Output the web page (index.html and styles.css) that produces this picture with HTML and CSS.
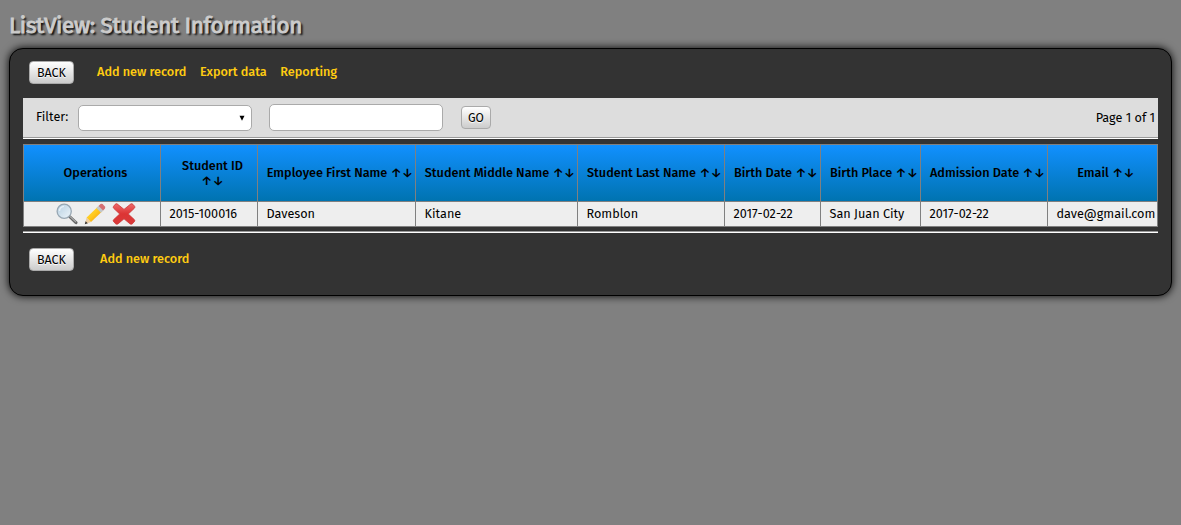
FILE: index.html
```html
<!DOCTYPE html>
<html lang="en">
<head>
<meta charset="utf-8">
<title>ListView: Student Information</title>
<link rel="stylesheet" href="styles.css">
</head>
<body>
<svg class="defs" width="0" height="0">
  <defs>
    <linearGradient id="lens" x1="0" y1="0" x2="1" y2="1"><stop offset="0" stop-color="#b4cde0"/><stop offset="1" stop-color="#eef6fb"/></linearGradient>
    <linearGradient id="wood" x1="0" y1="0" x2="1" y2="1"><stop offset="0" stop-color="#ffe34a"/><stop offset=".5" stop-color="#ffc71c"/><stop offset="1" stop-color="#f08a0c"/></linearGradient>
    <linearGradient id="red" x1="0" y1="0" x2="0" y2="1"><stop offset="0" stop-color="#ee6a6a"/><stop offset=".5" stop-color="#dc3434"/><stop offset="1" stop-color="#d93a3a"/></linearGradient>
  </defs>
</svg>
<h1 class="title">ListView: Student Information</h1>
<main class="panel">
  <div class="toolbar">
    <button class="btn back">BACK</button>
    <nav class="links"><a class="link">Add new record</a><a class="link">Export data</a><a class="link">Reporting</a></nav>
  </div>
  <form class="filter">
    <label class="filter-label">Filter:</label>
    <div class="select"><svg width="6" height="6" viewBox="0 0 6 6"><path d="M.5 .8H5.5L3 5.7Z"/></svg></div>
    <input class="field" type="text">
    <button class="btn go" type="button">GO</button>
    <span class="page">Page 1 of 1</span>
  </form>
  <div class="rule"></div>
  <table class="grid">
    <colgroup><col class="c1"><col class="c2"><col class="c3"><col class="c4"><col class="c5"><col class="c6"><col class="c7"><col class="c8"><col class="c9"></colgroup>
    <thead><tr>
      <th>Operations</th>
      <th>Student ID<br>↑↓</th>
      <th>Employee First Name ↑↓</th>
      <th>Student Middle Name ↑↓</th>
      <th>Student Last Name ↑↓</th>
      <th>Birth Date ↑↓</th>
      <th>Birth Place ↑↓</th>
      <th>Admission Date ↑↓</th>
      <th>Email ↑↓</th>
    </tr></thead>
    <tbody><tr>
      <td><div class="icons">
        <svg width="22" height="22" viewBox="0 0 22 22"><path d="M13.5 13.5L20 19.6" stroke="#666" stroke-width="3" stroke-linecap="round"/><path d="M14 13.5L20 19" stroke="#aaa" stroke-width="1.1"/><circle cx="8.2" cy="8.2" r="7.1" fill="url(#lens)" stroke="#98a7b3" stroke-width="1.3"/><path d="M3.5 8A5 5 0 0 1 8 3.4" fill="none" stroke="#e6f0f7" stroke-width="1.4"/></svg>
        <svg width="22" height="22" viewBox="0 0 22 22"><path d="M.8 21.2L2.6 14.5L7 19Z" fill="#edcda0"/><path d="M.8 21.2L1.6 18.2L3.8 20.3Z" fill="#333"/><path d="M2.6 14.5L13.8 3.7L18.3 8.3L7 19Z" fill="url(#wood)"/><path d="M12.4 5.1L15.2 2.3L19.7 6.9L16.9 9.7Z" fill="#c2c8cb"/><path d="M14.6 2.9L16.5 1.1Q17.5.3 18.6 1.1L20.9 3.4Q21.7 4.5 20.8 5.7L19.1 7.5Z" fill="#d66f72"/></svg>
        <svg width="24" height="22" viewBox="0 0 24 22"><path d="M5 .8L12 6.4L19 .8Q20.2.5 21.1 1.5L22.7 3.4Q23.1 4.4 22.3 5.3L16.3 11L22.5 16.8Q23.2 17.8 22.3 18.8L20.2 20.9Q19 21.6 17.8 20.7L12 15.8L6.2 20.7Q5 21.6 3.8 20.9L1.7 18.8Q.8 17.8 1.5 16.8L7.7 11L1.7 5.3Q.9 4.4 1.5 3.4L3.2 1.3Q4 .5 5 .8Z" fill="url(#red)" stroke="#cc3434" stroke-width=".8"/></svg>
      </div></td>
      <td>2015-100016</td><td>Daveson</td><td>Kitane</td><td>Romblon</td><td>2017-02-22</td><td>San Juan City</td><td>2017-02-22</td><td>dave@gmail.com</td>
    </tr></tbody>
  </table>
  <div class="rule lower"></div>
  <div class="footer">
    <button class="btn back">BACK</button>
    <a class="link">Add new record</a>
  </div>
</main>
</body>
</html>
```
FILE: styles.css
```css
* { box-sizing: border-box; }
body { margin: 0; padding: 0 9px; height: 525px; overflow: hidden; background: #808080; color: #000; font: 12.67px/15px "Fira Sans", "Noto Sans", sans-serif; }
.defs { position: absolute; }
.title { margin: 0; height: 48px; padding-top: 12px; font-size: 22.4px; line-height: 28px; font-weight: 400; letter-spacing: -.28px; -webkit-text-stroke: .9px #ccc; color: #ccc; text-shadow: 2px 2px 2px #000; white-space: nowrap; }
.panel { width: 1163px; height: 248px; border: 1px solid #000; border-radius: 14px; background: #333; box-shadow: 0 0 9px #000; padding: 0 13px; }
.toolbar { display: flex; height: 49px; padding: 12px 0 0 6px; }
.links { display: flex; gap: 13.5px; margin-left: 23px; padding-top: 3px; }
.link { color: #fc1; font-weight: 500; white-space: nowrap; }
.btn { height: 23px; padding: 0; border: 1px solid #aaa; border-radius: 4px; background: linear-gradient(#fff, #ccc); color: #000; font: 12.5px/20px "Fira Sans", "Noto Sans", sans-serif; text-shadow: 0 1px 1px #fff; }
.back { width: 45px; }
.go { width: 30px; margin-left: 18px; font-size: 12px; }
.filter { display: flex; align-items: center; height: 39px; padding: 0 3px 0 13px; background: #ddd; }
.filter-label { width: 42px; padding-bottom: 2px; }
.select { display: flex; align-items: center; justify-content: flex-end; width: 174px; height: 26px; padding-right: 6px; border: 1px solid #aaa; border-radius: 5px; background: #fff; }
.field { width: 174px; height: 27px; margin-left: 17px; border: 1px solid #aaa; border-radius: 5px; background: #fff; }
.page { margin-left: auto; white-space: nowrap; }
.rule { height: 2px; border-top: 1px solid #999; border-bottom: 1px solid #fff; }
.grid { table-layout: fixed; width: 1135px; margin-top: 5px; border-collapse: separate; border-spacing: 0; border: solid #808080; border-width: 1px 0 0 1px; }
.c1 { width: 137px; } .c2 { width: 97px; } .c3 { width: 158px; } .c4 { width: 162px; } .c5 { width: 147px; } .c6 { width: 96px; } .c7 { width: 100px; } .c8 { width: 127px; } .c9 { width: 110px; }
th, td { border: solid #808080; border-width: 0 1px 1px 0; white-space: nowrap; }
th { height: 57px; padding: 0 1px 1px 8px; font-weight: 500; background: linear-gradient(#1190ff, #0073b0); }
td { height: 25px; padding: 0 0 1px 8.5px; background: #eee; }
.icons { display: flex; gap: 6px; padding-left: 23.5px; }
.lower { margin-top: 4px; }
.footer { display: flex; padding: 15px 0 0 6px; }
.footer .link { margin: 3px 0 0 26px; }
```
